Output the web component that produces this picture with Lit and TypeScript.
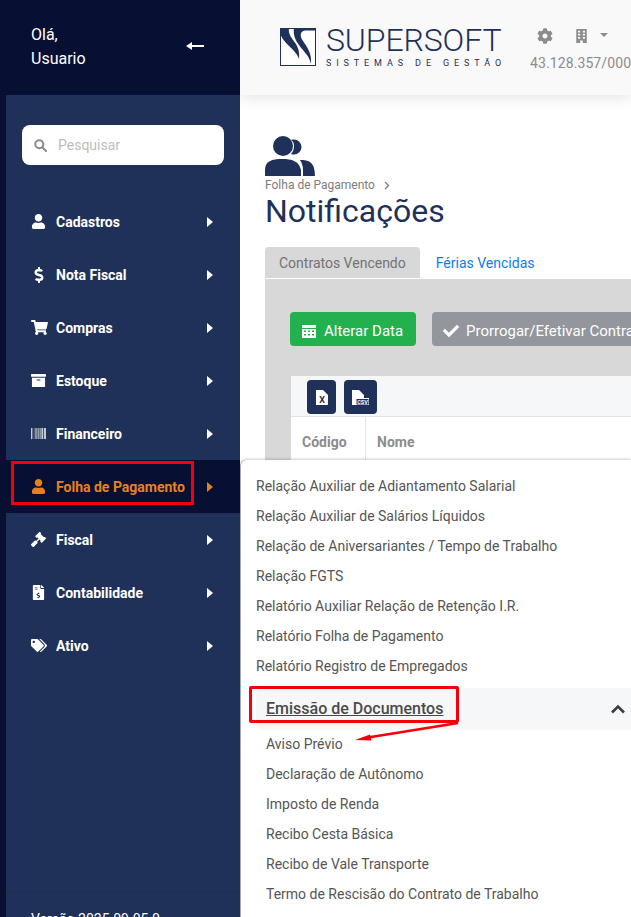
import { LitElement, html, css, svg } from "lit";
import { customElement } from "lit/decorators.js";

const ic = (vb: string, d: string, w = 16, h = 16) =>
  html`<svg class="ico" width=${w} height=${h} viewBox=${vb} fill="currentColor">${svg`<path d=${d}></path>`}</svg>`;

const USER = "M224 256c70.7 0 128-57.3 128-128S294.7 0 224 0 96 57.3 96 128s57.3 128 128 128zm89.6 32h-16.7c-22.2 10.2-46.9 16-72.9 16s-50.6-5.8-72.9-16h-16.7C60.2 288 0 348.2 0 422.4V464c0 26.5 21.5 48 48 48h352c26.5 0 48-21.5 48-48v-41.6c0-74.2-60.2-134.4-134.4-134.4z";
const DOLLAR = "M209.2 233.4l-108-31.6C88.7 198.2 80 186.5 80 173.5c0-16.3 13.2-29.5 29.5-29.5h66.3c12.2 0 24.2 3.7 34.2 10.5 6.1 4.1 14.3 3.1 19.5-2l34.8-34c7.1-6.9 6.1-18.4-1.8-24.5C238 74.8 207.4 64.1 176 64V16c0-8.8-7.2-16-16-16h-32c-8.8 0-16 7.2-16 16v48h-2.5C45.8 64-5.4 118.7.5 183.6c4.2 46.1 39.4 83.6 83.8 96.6l102.5 30c12.5 3.7 21.2 15.3 21.2 28.3 0 16.3-13.2 29.5-29.5 29.5h-66.3C100 368 88 364.3 78 357.5c-6.1-4.1-14.3-3.1-19.5 2l-34.8 34c-7.1 6.9-6.1 18.4 1.8 24.5 24.5 19.2 55.1 29.9 86.5 30v48c0 8.8 7.2 16 16 16h32c8.8 0 16-7.2 16-16v-48.2c46.6-.9 90.3-28.6 105.7-72.7 21.5-61.6-14.6-124.8-72.5-141.7z";
const CART = "M528.12 301.319l47.273-208C578.806 78.301 567.391 64 551.99 64H159.208l-9.166-44.81C147.758 8.021 137.93 0 126.529 0H24C10.745 0 0 10.745 0 24v16c0 13.255 10.745 24 24 24h69.883l70.248 343.435C147.325 417.1 136 435.222 136 456c0 30.928 25.072 56 56 56s56-25.072 56-56c0-15.674-6.447-29.835-16.824-40h209.647C430.447 426.165 424 440.326 424 456c0 30.928 25.072 56 56 56s56-25.072 56-56c0-22.172-12.888-41.332-31.579-50.405l5.517-24.276c3.413-15.018-8.002-29.319-23.403-29.319H218.117l-6.545-32h293.145c11.206 0 20.92-7.754 23.403-18.681z";
const ARCHIVE = "M32 448c0 17.7 14.3 32 32 32h384c17.7 0 32-14.3 32-32V160H32v288zm160-212c0-6.6 5.4-12 12-12h104c6.6 0 12 5.4 12 12v8c0 6.6-5.4 12-12 12H204c-6.6 0-12-5.4-12-12v-8zM480 32H32C14.3 32 0 46.3 0 64v48c0 8.8 7.2 16 16 16h480c8.8 0 16-7.2 16-16V64c0-17.7-14.3-32-32-32z";
const BARCODE = "M0 448V64h18v384H0zm26.857-.273V64H36v383.727h-9.143zm27.143 0V64h8.857v383.727H54zm44.857 0V64h8.857v383.727h-8.857zm36 0V64h17.714v383.727h-17.714zm44.857 0V64h8.857v383.727h-8.857zm18 0V64h8.857v383.727h-8.857zm18 0V64h8.857v383.727h-8.857zm35.715 0V64h18v383.727h-18zm44.857 0V64h18v383.727h-18zm35.999 0V64h18.001v383.727h-18.001zm36.001 0V64h18.001v383.727h-18.001zm26.857 0V64h18v383.727h-18zm45.143 0V64h26.857v383.727h-26.857zm35.714 0V64h9.143v383.727H476zm18 .273V64h18v384h-18z";
const GAVEL = "M504.971 199.362l-22.627-22.627c-9.373-9.373-24.569-9.373-33.941 0l-5.657 5.657L329.608 69.255l5.657-5.657c9.373-9.373 9.373-24.569 0-33.941L312.638 7.029c-9.373-9.373-24.569-9.373-33.941 0L154.246 131.48c-9.373 9.373-9.373 24.569 0 33.941l22.627 22.627c9.373 9.373 24.569 9.373 33.941 0l5.657-5.657 39.598 39.598-81.04 81.04-5.657-5.657c-12.497-12.497-32.758-12.497-45.255 0L9.373 412.118c-12.497 12.497-12.497 32.758 0 45.255l45.255 45.255c12.497 12.497 32.758 12.497 45.255 0l114.745-114.745c12.497-12.497 12.497-32.758 0-45.255l-5.657-5.657 81.04-81.04 39.598 39.598-5.657 5.657c-9.373 9.373-9.373 24.569 0 33.941l22.627 22.627c9.373 9.373 24.569 9.373 33.941 0l124.451-124.451c9.372-9.372 9.372-24.568 0-33.941z";
const FILEDOLLAR = "M24 0h230v110c0 14 12 26 26 26h104v352c0 13-11 24-24 24H24c-13 0-24-11-24-24V24C0 11 11 0 24 0zM288 0l96 98v6h-104V0zM64 64v24h96V64zm0 64v24h96v-24zM176 256v24c-28 4-48 24-48 48 0 30 26 40 50 46 18 4 30 8 30 20 0 10-12 16-26 16-12 0-24-4-34-10l-12 20c10 8 24 12 40 14v22h24v-22c28-4 48-22 48-46 0-30-26-40-50-46-18-4-30-8-30-20 0-10 10-16 24-16 10 0 20 2 30 8l12-20c-10-6-22-10-34-12v-26z";
const TAGS = "M497.9 225.9L286.1 14.1A48 48 0 0 0 252.1 0H48C21.5 0 0 21.5 0 48v204.1a48 48 0 0 0 14.1 33.9l211.9 211.9c18.7 18.7 49.1 18.7 67.9 0l204.1-204.1c18.7-18.7 18.7-49.1-.1-67.9zM112 160c-26.5 0-48-21.5-48-48s21.5-48 48-48 48 21.5 48 48-21.5 48-48 48zm513.9 133.8L421.8 497.9c-18.7 18.7-49.1 18.7-67.9 0l-.4-.4L527.6 323.5c17-17 26.4-39.6 26.4-63.6s-9.4-46.6-26.4-63.6L331.4 0h48.7a48 48 0 0 1 33.9 14.1l211.9 211.9c18.7 18.7 18.7 49.1 0 67.8z";
const COG = "M487.4 315.7l-42.6-24.6c4.3-23.2 4.3-47 0-70.2l42.6-24.6c4.9-2.8 7.1-8.6 5.5-14-11.1-35.6-30-67.8-54.7-94.6-3.8-4.1-10-5.1-14.8-2.3L380.8 110c-17.9-15.4-38.5-27.3-60.8-35.1V25.8c0-5.6-3.9-10.5-9.4-11.7-36.7-8.2-74.3-7.8-109.2 0-5.5 1.2-9.4 6.1-9.4 11.7V75c-22.2 7.9-42.8 19.8-60.8 35.1L88.7 85.5c-4.9-2.8-11-1.9-14.8 2.3-24.7 26.7-43.6 58.9-54.7 94.6-1.7 5.4.6 11.2 5.5 14L67.3 221c-4.3 23.2-4.3 47 0 70.2l-42.6 24.6c-4.9 2.8-7.1 8.6-5.5 14 11.1 35.6 30 67.8 54.7 94.6 3.8 4.1 10 5.1 14.8 2.3l42.6-24.6c17.9 15.4 38.5 27.3 60.8 35.1v49.2c0 5.6 3.9 10.5 9.4 11.7 36.7 8.2 74.3 7.8 109.2 0 5.5-1.2 9.4-6.1 9.4-11.7v-49.2c22.2-7.9 42.8-19.8 60.8-35.1l42.6 24.6c4.9 2.8 11 1.9 14.8-2.3 24.7-26.7 43.6-58.9 54.7-94.6 1.5-5.5-.7-11.3-5.6-14.1zM256 336c-44.1 0-80-35.9-80-80s35.9-80 80-80 80 35.9 80 80-35.9 80-80 80z";
const CHECK = "M173.898 439.404l-166.4-166.4c-9.997-9.997-9.997-26.206 0-36.204l36.203-36.204c9.997-9.998 26.207-9.998 36.204 0L192 312.69 432.095 72.596c9.997-9.997 26.207-9.997 36.204 0l36.203 36.204c9.997 9.997 9.997 26.206 0 36.204l-294.4 294.401c-9.998 9.997-26.207 9.997-36.204-.001z";
const BUILDING = "M16 0h352c9 0 16 7 16 16v496H240v-96h-96v96H0V16C0 7 7 0 16 0zM64 64v64h80V64zm176 0v64h80V64zM64 176v64h80v-64zm176 0v64h80v-64zM64 288v64h80v-64zm176 0v64h80v-64z";
const CAL = "M0 64h448v96H0zM0 192h448v288H0zM64 240v48h64v-48zm128 0v48h64v-48zm128 0v48h64v-48zM64 352v48h64v-48zm128 0v48h64v-48zm128 0v48h64v-48z";

const menu: [string, string, string, number, number][] = [
  ["Cadastros", "-32 0 512 512", USER, 15, 15],
  ["Nota Fiscal", "-112 0 512 512", DOLLAR, 16, 16],
  ["Compras", "0 0 576 512", CART, 17, 15],
  ["Estoque", "0 0 512 512", ARCHIVE, 15, 15],
  ["Financeiro", "0 0 512 512", BARCODE, 15, 15],
  ["Folha de Pagamento", "-32 0 512 512", USER, 15, 15],
  ["Fiscal", "0 0 512 512", GAVEL, 15, 15],
  ["Contabilidade", "-64 0 512 512", FILEDOLLAR, 15, 15],
  ["Ativo", "0 0 640 512", TAGS, 16, 13],
];

const upper = [
  "Relação Auxiliar de Adiantamento Salarial",
  "Relação Auxiliar de Salários Líquidos",
  "Relação de Aniversariantes / Tempo de Trabalho",
  "Relação FGTS",
  "Relatório Auxiliar Relação de Retenção I.R.",
  "Relatório Folha de Pagamento",
  "Relatório Registro de Empregados",
];
const lower = [
  "Aviso Prévio",
  "Declaração de Autônomo",
  "Imposto de Renda",
  "Recibo Cesta Básica",
  "Recibo de Vale Transporte",
  "Termo de Rescisão do Contrato de Trabalho",
];

@customElement("app-root")
export class AppRoot extends LitElement {
  static styles = css`
    :host { display: block; width: 631px; height: 917px; overflow: hidden; font-family: Roboto, "Liberation Sans", sans-serif; }
    * { box-sizing: border-box; }
    .root { position: relative; width: 631px; height: 917px; display: flex; overflow: hidden; background: #fff; }
    .ico { display: block; flex: none; }

    aside { width: 240px; flex: none; height: 917px; background: #071033; display: flex; flex-direction: column; position: relative; z-index: 2; }
    .hello { height: 95px; display: flex; align-items: center; justify-content: space-between; padding: 0 36px 1px 31px; color: #fff; font-size: 16px; line-height: 24px; }
    .back { display: block; margin-bottom: 2px; }
    .panel { flex: 1; margin-left: 6px; background: #1f3158; display: flex; flex-direction: column; min-height: 0; }
    .search { margin: 30px 16px 30px 16px; height: 40px; background: #fff; border-radius: 8px; display: flex; align-items: center; padding-left: 12px; gap: 11px; color: #bdbdbd; font-size: 14px; }
    .search svg { color: #8a8a8a; }
    .item { height: 53px; display: flex; align-items: center; color: #fff; font-size: 14px; font-weight: 700; padding-left: 25px; }
    .item .slot { width: 25px; display: flex; align-items: center; flex: none; }
    .item .lbl { flex: 1; }
    .item .caret { width: 0; height: 0; border-left: 6px solid currentColor; border-top: 5px solid transparent; border-bottom: 5px solid transparent; margin-right: 27px; }
    .item.on { background: #071033; color: #e8801e; }
    .version { margin-top: auto; height: 25px; padding: 16px 0 0 25px; overflow: hidden; color: #fff; font-size: 14px; line-height: 20px; border-top: 1px solid #1e2e52; }

    main { flex: 1; min-width: 0; display: flex; flex-direction: column; }
    header { height: 95px; flex: none; background: #f9f9f9; box-shadow: 0 2px 14px rgba(0,0,0,.12); display: flex; padding: 27px 0 0 40px; position: relative; z-index: 1; }
    .logo { display: flex; gap: 10px; flex: none; width: 250px; }
    .mark { margin-top: 1px; }
    .brand { color: #1f3158; display: flex; flex-direction: column; }
    .brand b { font-weight: 300; font-size: 32px; line-height: 26px; letter-spacing: -.1px; white-space: nowrap; }
    .brand i { font-style: normal; font-size: 9px; line-height: 10px; letter-spacing: 4.9px; margin-top: 5px; white-space: nowrap; }
    .tools { color: #8c8c8c; }
    .tool-ic { display: flex; align-items: center; gap: 23px; height: 18px; padding-left: 7px; }
    .tool-ic .dd { width: 0; height: 0; border-top: 4px solid #8c8c8c; border-left: 4px solid transparent; border-right: 4px solid transparent; margin-left: -10px; margin-bottom: 3px; }
    .cnpj { font-size: 14px; letter-spacing: .1px; line-height: 18px; margin-top: 9px; white-space: nowrap; }

    .content { flex: 1; padding: 40px 0 0 25px; min-height: 0; overflow: hidden; }
    .crumb { color: #7c7c7c; font-size: 12px; line-height: 14px; display: flex; align-items: center; gap: 9px; margin-top: 2px; }
    h1 { margin: 0; font-size: 32px; font-weight: 400; line-height: 38px; color: #1f3158; }
    .tabs { display: flex; margin-top: 17px; font-size: 14px; height: 32px; }
    .tab { height: 32px; padding: 0 14px; line-height: 32px; white-space: nowrap; }
    .tab.on { background: #d8d8d8; color: #737373; border-radius: 4px 4px 0 0; border-bottom: 1px solid #fff; }
    .tab.off { color: #0d7bf2; padding-left: 16px; }
    .pane { background: #d8d8d8; height: 200px; padding: 33px 0 0 25px; }
    .btns { display: flex; gap: 16px; }
    .btn { height: 34px; border-radius: 4px; display: flex; align-items: center; color: #fff; font-size: 15px; font-weight: 400; gap: 8px; padding: 3px 12px 0; flex: none; white-space: nowrap; }
    .btn.g { background: #22b14e; width: 126px; }
    .btn.s { background: #93969c; width: 240px; padding-left: 11px; gap: 7px; }
    .card { margin: 30px 0 0 1px; background: #fff; }
    .bar { height: 41px; background: #f6f7f9; border-bottom: 1px solid #e3e4e8; display: flex; gap: 8px; padding: 4px 0 0 16px; }
    .fbtn { height: 34px; background: #1f3158; border-radius: 4px; display: flex; align-items: center; justify-content: center; color: #fff; }
    .fbtn.x { width: 29px; }
    .fbtn.c { width: 33px; }
    .thead { display: flex; height: 60px; color: #8c8c8c; font-weight: 700; font-size: 14px; }
    .thead div { padding: 17px 0 0 11px; line-height: 16px; }
    .thead .code { width: 75px; border-right: 1px solid #e3e4e8; }

    .sub { position: absolute; left: 240px; top: 460px; width: 391px; height: 457px; background: #fff; border-left: 1px solid #a9a9a9; border-radius: 6px 0 0 0; box-shadow: 0 -1px 3px rgba(0,0,0,.2); padding: 11px 0 0 0; color: #555; font-size: 14px; z-index: 1; }
    .sub .r { height: 30px; line-height: 30px; padding-left: 15px; white-space: nowrap; }
    .sub .group { margin: 7px 0 0 15px; height: 42px; background: #f6f7f9; border-radius: 6px 0 0 6px; display: flex; align-items: center; justify-content: space-between; padding: 0 5px 1px 10px; color: #4a4a4a; font-weight: 500; font-size: 16px; text-decoration: underline; }
    .sub .g2 { margin-top: -1px; }
    .sub .g2 .r { padding-left: 25px; }

    .mark-box { position: absolute; border: 3px solid #f4000a; pointer-events: none; z-index: 5; }
    .mb1 { left: 11px; top: 461px; width: 183px; height: 44px; }
    .mb2 { left: 249px; top: 686px; width: 210px; height: 37px; border-radius: 2px; }
    .arrow { position: absolute; left: 350px; top: 718px; z-index: 5; }
  `;

  render() {
    return html`
      <div class="root">
        <aside>
          <div class="hello">
            <div>Olá,<br />Usuario</div>
            <svg class="back" width="18" height="10" viewBox="0 0 18 10" fill="#fff"><path d="M0 5 6 1v3h12v2H6v3z"></path></svg>
          </div>
          <div class="panel">
            <div class="search">
              <svg width="13" height="13" viewBox="0 0 13 13" fill="none" stroke="currentColor" stroke-width="2"><circle cx="5.3" cy="5.3" r="4"></circle><path d="M8.3 8.3 12 12" stroke-linecap="round"></path></svg>
              <span>Pesquisar</span>
            </div>
            ${menu.map(
              ([l, vb, d, w, h]) => html`
                <div class="item ${l === "Folha de Pagamento" ? "on" : ""}">
                  <span class="slot">${ic(vb, d, w, h)}</span>
                  <span class="lbl">${l}</span>
                  <span class="caret"></span>
                </div>
              `
            )}
            <div class="version">Versão 2025.09.05.0</div>
          </div>
        </aside>
        <main>
          <header>
            <div class="logo">
              <svg class="mark" width="36" height="38" viewBox="0 0 36 38">
                <rect x=".5" y=".5" width="35" height="37" fill="#fff" stroke="#1f3158"></rect>
                <path fill="#1f3158" d="M0 0h36v2.500H25C20 3 19.500 8 23 13c4 6 9 12 8 23-2-9-8-13-12-19-4-5-6-11-5-17zM0 0h9c-1 4 1 8 4 12 4 5 7 10 6 19-2-6-7-10-11-14C4 13 1 9 0 5z"></path>
              </svg>
              <div class="brand"><b>SUPERSOFT</b><i>SISTEMAS DE GESTÃO</i></div>
            </div>
            <div class="tools">
              <div class="tool-ic">
                ${ic("0 0 512 512", COG, 16, 16)} ${ic("0 0 384 512", BUILDING, 11, 14)}
                <span class="dd"></span>
              </div>
              <div class="cnpj">43.128.357/0001-00</div>
            </div>
          </header>
          <div class="content">
            <svg class="ico" width="50" height="41" viewBox="0 0 50 41" fill="#1f3158">
              <circle cx="18" cy="11" r="10"></circle><path d="M0 41v-6C0 26 7 24 17 24s17 2 19 11v6z"></path>
              <path d="M29 4.500a7.500 7.500 0 1 1 0 15c-1 0-2 0-3-.5 2-2 3-5 3-8s-1-5-3-6c1-.5 2-.5 3-.5zM35 25c9 0 15 2 15 16H38v-6c0-4-1-7-3-10z"></path>
            </svg>
            <div class="crumb">
              Folha de Pagamento
              <svg width="6" height="9" viewBox="0 0 6 9" fill="none" stroke="#7c7c7c" stroke-width="1.300"><path d="M1 1l3.500 3.500L1 8"></path></svg>
            </div>
            <h1>Notificações</h1>
            <div class="tabs">
              <div class="tab on">Contratos Vencendo</div>
              <div class="tab off">Férias Vencidas</div>
            </div>
            <div class="pane">
              <div class="btns">
                <div class="btn g">${ic("0 0 448 512", CAL, 14, 16)}Alterar Data</div>
                <div class="btn s">${ic("0 0 512 512", CHECK, 16, 16)}Prorrogar/Efetivar Contratos</div>
              </div>
              <div class="card">
                <div class="bar">
                  <div class="fbtn x">
                    <svg width="12" height="15" viewBox="0 0 12 15"><path fill="#fff" d="M0 0h7l5 5v10H0z"></path><text x="6" y="13" font-size="9" font-weight="700" text-anchor="middle" fill="#1f3158" font-family="Roboto">X</text></svg>
                  </div>
                  <div class="fbtn c">
                    <svg width="17" height="15" viewBox="0 0 17 15"><path fill="#fff" d="M0 0h7l5 5v10H0z"></path><rect x="3.500" y="8" width="13.500" height="7" fill="#fff"></rect><rect x="4.500" y="9" width="12" height="5.500" fill="#1f3158"></rect><text x="10.500" y="14" font-size="5.500" font-weight="700" text-anchor="middle" fill="#fff" font-family="Roboto">CSV</text></svg>
                  </div>
                </div>
                <div class="thead"><div class="code">Código</div><div>Nome</div></div>
              </div>
            </div>
          </div>
        </main>
        <div class="sub">
          ${upper.map((t) => html`<div class="r">${t}</div>`)}
          <div class="group">
            <span>Emissão de Documentos</span>
            <svg width="16" height="10" viewBox="0 0 16 10" fill="none" stroke="#3c3c3c" stroke-width="2.600"><path d="M2 8.500 8 2.500l6 6"></path></svg>
          </div>
          <div class="g2">${lower.map((t) => html`<div class="r">${t}</div>`)}</div>
        </div>
        <div class="mark-box mb1"></div>
        <div class="mark-box mb2"></div>
        <svg class="arrow" width="112" height="26" viewBox="0 0 112 26"><path d="M108 5 18 19.500" stroke="#f4000a" stroke-width="2.500" fill="none"></path><path d="M5 22 20 16.500l1.500 6z" fill="#f4000a"></path></svg>
      </div>
    `;
  }
}
